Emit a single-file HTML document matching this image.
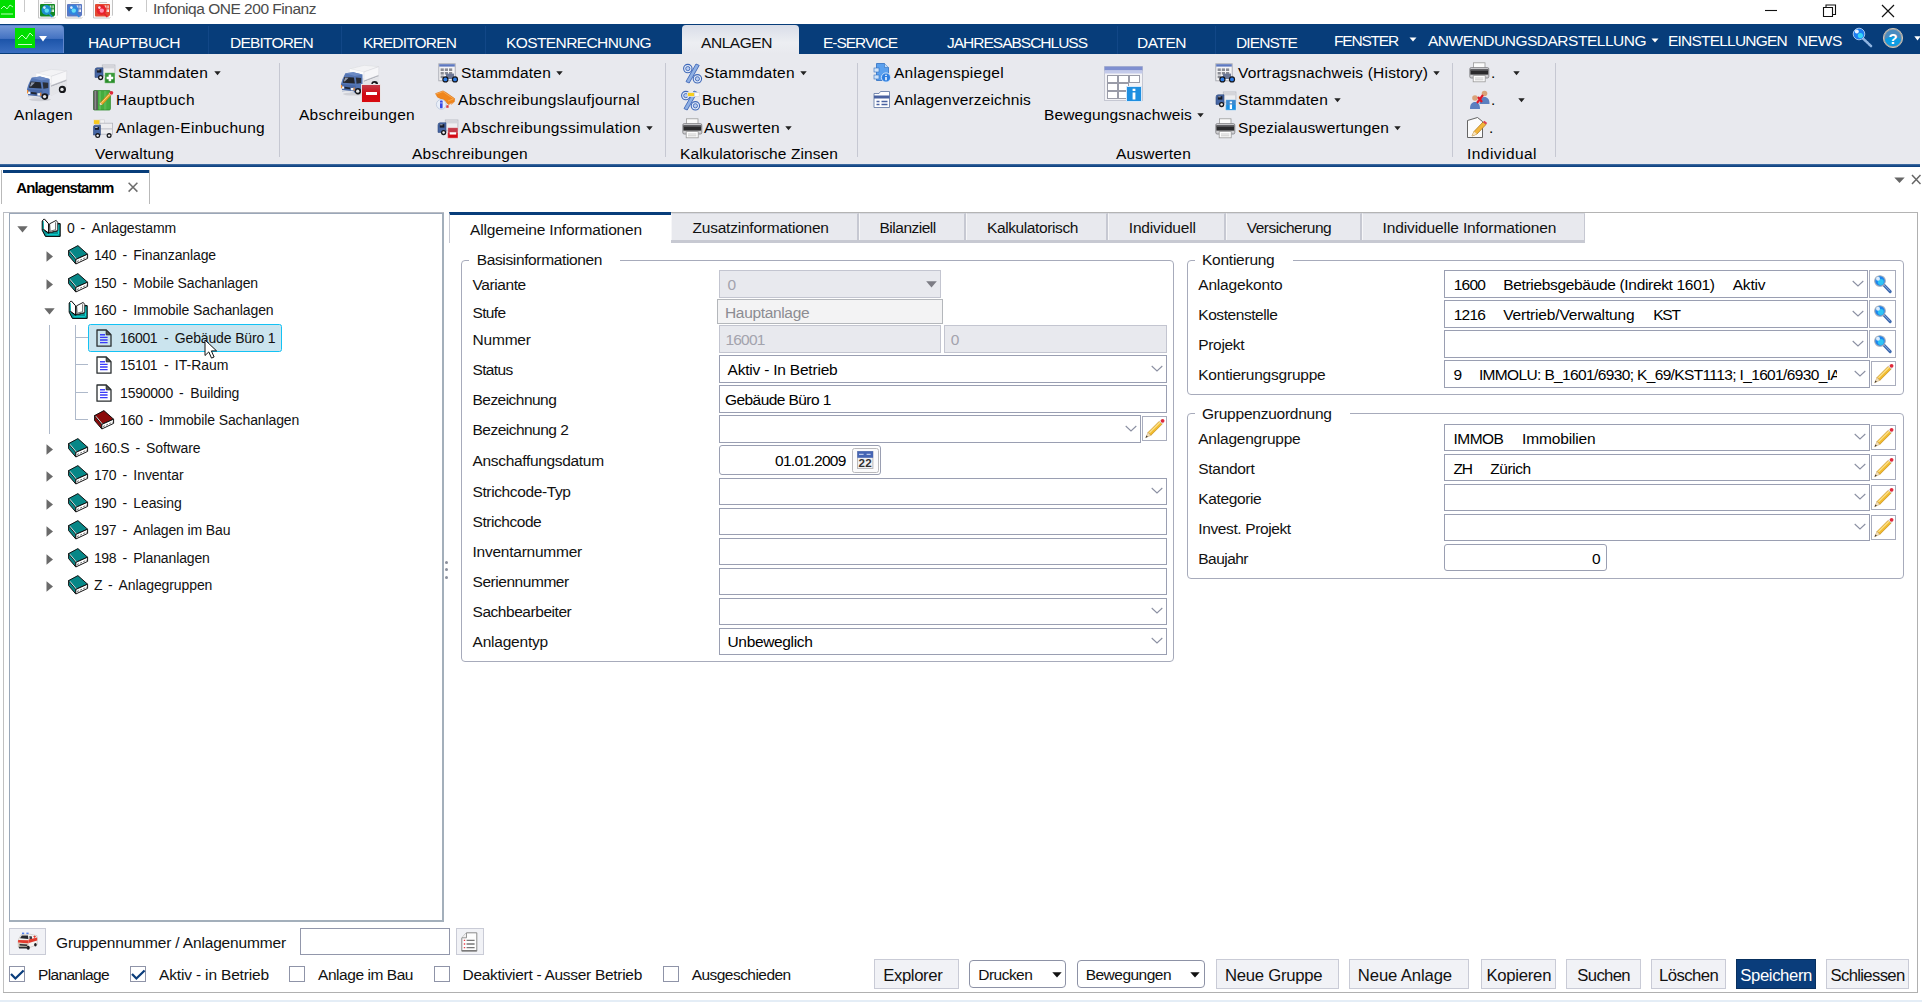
<!DOCTYPE html>
<html lang="de"><head><meta charset="utf-8"><title>Infoniqa ONE 200 Finanz</title>
<style>
html,body{margin:0;padding:0;}
body{width:1922px;height:1002px;overflow:hidden;position:relative;background:#fff;font-family:"Liberation Sans",sans-serif;}
div,span.t,svg{position:absolute;box-sizing:border-box;}
span.t{line-height:20px;white-space:pre;}
.f{border:1px solid #9a9fb2;background:#fff;}
.fd{border:1px solid #c3c5d0;background:#e8e9ee;}
.btn{border:1px solid #c9cbd6;background:#f1f2f6;}
.sb{border:1px solid #b4b7c5;background:#fff;}
.gb{border:1px solid #a9adbc;border-radius:4px;}

</style></head>
<body>
<div style="left:0px;top:0px;width:15px;height:17.5px;background:#00de00;"></div>
<svg style="left:0px;top:0px;" width="15" height="17" viewBox="0 0 15 17"><path d="M1 9 L4 6 L7 9 L10 5 L13 7" stroke="#b8ffb8" stroke-width="1" fill="none"/><path d="M1 14 H13" stroke="#b8ffb8" stroke-width="1"/></svg>
<div style="left:24px;top:0px;width:1px;height:12px;background:#c9c9c9;"></div>
<svg style="left:38px;top:0px;" width="21" height="19" viewBox="0 0 21 19"><path d="M0.5 -1 V18 H16.5 L19.5 15.5 V-1z" fill="#fbfbfb" stroke="#c4c4c4"/><path d="M6 2.5h8" stroke="#c9c9c9" stroke-width="1"/><rect x="2" y="4" width="15" height="12.5" rx="1" fill="#138a24"/><rect x="11.6" y="5.4" width="1.8" height="3" fill="#fff" opacity=".75"/><rect x="14.2" y="5.4" width="1.8" height="3" fill="#fff" opacity=".6"/><rect x="11.6" y="9.4" width="1.8" height="2.6" fill="#fff" opacity=".9"/><rect x="14.2" y="9.4" width="1.8" height="2.6" fill="#fff" opacity=".9"/><circle cx="8.4" cy="10" r="4.9" fill="#1e8fd0"/><circle cx="8.8" cy="10.6" r="2.2" fill="#5fe0f0"/><circle cx="6.4" cy="7.6" r="1.3" fill="#fff" opacity=".85"/><path d="M11.2 13.6l3.2 3.4" stroke="#1e8fd0" stroke-width="1.6"/><path d="M16 16.5h3.5" stroke="#fff" stroke-width="1.6"/></svg>
<svg style="left:65px;top:0px;" width="21" height="19" viewBox="0 0 21 19"><path d="M0.5 -1 V18 H16.5 L19.5 15.5 V-1z" fill="#fbfbfb" stroke="#c4c4c4"/><path d="M6 2.5h8" stroke="#c9c9c9" stroke-width="1"/><rect x="2" y="4" width="15" height="12.5" rx="1" fill="#5878c4"/><rect x="11.6" y="5.4" width="1.8" height="3" fill="#fff" opacity=".75"/><rect x="14.2" y="5.4" width="1.8" height="3" fill="#fff" opacity=".6"/><rect x="11.6" y="9.4" width="1.8" height="2.6" fill="#fff" opacity=".9"/><rect x="14.2" y="9.4" width="1.8" height="2.6" fill="#fff" opacity=".9"/><circle cx="8.4" cy="10" r="4.9" fill="#2f86e0"/><circle cx="8.8" cy="10.6" r="2.2" fill="#62dcf4"/><circle cx="6.4" cy="7.6" r="1.3" fill="#fff" opacity=".85"/><path d="M11.2 13.6l3.2 3.4" stroke="#2f86e0" stroke-width="1.6"/><path d="M16 16.5h3.5" stroke="#fff" stroke-width="1.6"/></svg>
<svg style="left:93px;top:0px;" width="21" height="19" viewBox="0 0 21 19"><path d="M0.5 -1 V18 H16.5 L19.5 15.5 V-1z" fill="#fbfbfb" stroke="#c4c4c4"/><path d="M6 2.5h8" stroke="#c9c9c9" stroke-width="1"/><rect x="2" y="4" width="15" height="12.5" rx="1" fill="#e24a32"/><rect x="11.6" y="5.4" width="1.8" height="3" fill="#fff" opacity=".75"/><rect x="14.2" y="5.4" width="1.8" height="3" fill="#fff" opacity=".6"/><rect x="11.6" y="9.4" width="1.8" height="2.6" fill="#fff" opacity=".9"/><rect x="14.2" y="9.4" width="1.8" height="2.6" fill="#fff" opacity=".9"/><circle cx="8.4" cy="10" r="4.9" fill="#e8202a"/><circle cx="8.8" cy="10.6" r="2.2" fill="#ff8fb0"/><circle cx="6.4" cy="7.6" r="1.3" fill="#fff" opacity=".85"/><path d="M11.2 13.6l3.2 3.4" stroke="#e8202a" stroke-width="1.6"/><path d="M16 16.5h3.5" stroke="#fff" stroke-width="1.6"/></svg>
<svg style="left:124px;top:6px;" width="10" height="6" viewBox="0 0 10 6"><path d="M1 1h8l-4 4.5z" fill="#222"/></svg>
<div style="left:146px;top:0px;width:1px;height:12px;background:#c9c9c9;"></div>
<span class="t" style="letter-spacing:-0.481px;top:-1.5px;font-size:15.5px;color:#4b4b4b;left:153px;">Infoniqa ONE 200 Finanz</span>
<svg style="left:1761px;top:0px;" width="140" height="22" viewBox="0 0 140 22"><path d="M4 10.5h12" stroke="#111" stroke-width="1.1"/><path d="M62.5 7.5h9v9h-9z M65 7.5v-2.5h9.5v9.5h-3" stroke="#111" stroke-width="1.1" fill="none"/><path d="M121 5l12 12M133 5l-12 12" stroke="#111" stroke-width="1.2"/></svg>
<div style="left:0px;top:24px;width:1920px;height:30px;background:#073d7a;"></div>
<div style="left:0px;top:25px;width:64px;height:28px;background:linear-gradient(#7397d6,#4473c2 46%,#1d55aa 50%,#3a6ec0);border-radius:0 4px 0 0;border-right:1px solid #5f86cc;border-top:1px solid #5f86cc;"></div>
<div style="left:15px;top:28px;width:20px;height:20px;background:#00de00;"></div>
<svg style="left:15px;top:28px;" width="20" height="20" viewBox="0 0 20 20"><path d="M3 11 L7 7 L11 11 L15 5 L18 8" stroke="#c8ffc8" stroke-width="1" fill="none"/><path d="M3 16.5 H17" stroke="#c8ffc8" stroke-width="1"/></svg>
<svg style="left:38px;top:35px;" width="10" height="8" viewBox="0 0 10 8"><path d="M1 1h8l-4 5.5z" fill="#fff"/></svg>
<div style="left:682px;top:25px;width:117px;height:29px;background:linear-gradient(#d9dde8,#eceef2 60%,#e8e9ee);border-radius:4px 4px 0 0;"></div>
<span class="t" style="letter-spacing:-0.495px;top:32.5px;font-size:15.5px;color:#fff;left:88px;">HAUPTBUCH</span>
<span class="t" style="letter-spacing:-0.795px;top:32.5px;font-size:15.5px;color:#fff;left:230px;">DEBITOREN</span>
<span class="t" style="letter-spacing:-0.834px;top:32.5px;font-size:15.5px;color:#fff;left:363px;">KREDITOREN</span>
<span class="t" style="letter-spacing:-0.593px;top:32.5px;font-size:15.5px;color:#fff;left:506px;">KOSTENRECHNUNG</span>
<span class="t" style="letter-spacing:-1.031px;top:32.5px;font-size:15.5px;color:#fff;left:823px;">E-SERVICE</span>
<span class="t" style="letter-spacing:-1.003px;top:32.5px;font-size:15.5px;color:#fff;left:947px;">JAHRESABSCHLUSS</span>
<span class="t" style="letter-spacing:-0.478px;top:32.5px;font-size:15.5px;color:#fff;left:1137px;">DATEN</span>
<span class="t" style="letter-spacing:-0.884px;top:32.5px;font-size:15.5px;color:#fff;left:1236px;">DIENSTE</span>
<span class="t" style="letter-spacing:-0.442px;top:32.5px;font-size:15.5px;color:#111;left:701px;">ANLAGEN</span>
<div style="left:208px;top:26px;width:1px;height:28px;background:#124787;"></div>
<div style="left:341px;top:26px;width:1px;height:28px;background:#124787;"></div>
<div style="left:485px;top:26px;width:1px;height:28px;background:#124787;"></div>
<div style="left:1117px;top:26px;width:1px;height:28px;background:#124787;"></div>
<div style="left:1215px;top:26px;width:1px;height:28px;background:#124787;"></div>
<span class="t" style="letter-spacing:-1.2px;top:30.5px;font-size:15.5px;color:#fff;left:1334px;">FENSTER</span>
<svg style="left:1409px;top:37px;" width="8" height="6" viewBox="0 0 8 6"><path d="M0.5 0.5h7l-3.5 4z" fill="#fff"/></svg>
<span class="t" style="letter-spacing:-0.487px;top:30.5px;font-size:15.5px;color:#fff;left:1428px;">ANWENDUNGSDARSTELLUNG</span>
<svg style="left:1651px;top:38px;" width="8" height="6" viewBox="0 0 8 6"><path d="M0.5 0.5h7l-3.5 4z" fill="#fff"/></svg>
<span class="t" style="letter-spacing:-0.785px;top:30.5px;font-size:15.5px;color:#fff;left:1668px;">EINSTELLUNGEN</span>
<span class="t" style="letter-spacing:-0.375px;top:30.5px;font-size:15.5px;color:#fff;left:1797px;">NEWS</span>
<svg style="left:1851px;top:26px;" width="24" height="24" viewBox="0 0 24 24"><path d="M12 12.5l8 7.5" stroke="#8fb4e0" stroke-width="2.6" stroke-linecap="round" stroke-dasharray="1.6 1"/><circle cx="8" cy="8" r="5.8" fill="#1c7df0" stroke="#9fc4ee" stroke-width="1"/><circle cx="9.4" cy="9.6" r="2.6" fill="#35d6f6"/><circle cx="5.8" cy="5.6" r="2" fill="#e8f2ff"/></svg>
<svg style="left:1882px;top:27px;" width="22" height="22" viewBox="0 0 22 22"><circle cx="11" cy="11" r="9.6" fill="#9aa0a8" stroke="#c9c3b4" stroke-width="1"/><circle cx="11" cy="11" r="8.2" fill="#4a8cc0"/><path d="M2.9 12.2 A8.2 8.2 0 0 0 19.1 12.2 Q11 7.5 2.9 12.2z" fill="#0c9ce2"/></svg>
<span class="t" style="top:28.5px;font-size:15px;color:#fff;font-weight:700;left:1888.4px;">?</span>
<svg style="left:1913.5px;top:36px;" width="7" height="6" viewBox="0 0 7 6"><path d="M0.3 0.3h6.4l-3.2 4.2z" fill="#fff"/></svg>
<div style="left:0px;top:54px;width:1920px;height:110px;background:#e8e9ee;"></div>
<div style="left:0px;top:164px;width:1920px;height:3px;background:linear-gradient(#4a74a8,#1c4f8c 50%,#0a3d7b);"></div>
<div style="left:279px;top:63px;width:1px;height:94px;background:#c6c8d2;"></div>
<div style="left:665px;top:63px;width:1px;height:94px;background:#c6c8d2;"></div>
<div style="left:857px;top:63px;width:1px;height:94px;background:#c6c8d2;"></div>
<div style="left:1452px;top:63px;width:1px;height:94px;background:#c6c8d2;"></div>
<div style="left:1555px;top:63px;width:1px;height:94px;background:#c6c8d2;"></div>
<svg style="left:26px;top:68px;" width="42" height="34" viewBox="0 0 42 34"><ellipse cx="14" cy="31.6" rx="11" ry="1.6" fill="#cfd0d6"/><path d="M10.3 5.2 L25.3 1.4 L40.8 2.8 L25.1 8.4z" fill="#f3f3f5" stroke="#d9dade" stroke-width=".5"/><path d="M10.3 5.2 L25.1 8.4 L25.1 15 L10.3 11.5z" fill="#fdfdfd"/><path d="M25.1 8.4 L40.8 2.8 L40.4 19.8 L25.1 27.6z" fill="#f6f6f8" stroke="#d4d5da" stroke-width=".5"/><path d="M25.1 17.2 L40.4 11.6 L40.4 13.2 L25.1 19z" fill="#b4b6be"/><path d="M25.1 19 L40.4 13.2 L40.4 19.8 L25.1 27.6z" fill="#e4e5e9"/><path d="M5.6 9.8 L14 8.6 L23.6 11 L23.6 26.8 L19.5 30 L2.6 28.8 L1 21 L2.6 16z" fill="#5576b4"/><path d="M5.6 9.8 L14 8.6 L23.6 11 L15.5 12.6z" fill="#6b8ac4"/><path d="M4.6 13.6 L14.6 14.2 L15.6 20.6 L3 19.8z" fill="#23262e"/><path d="M5.4 14.2 L9 14.4 L5 18.4 L4 18.2z" fill="#8e98ac"/><path d="M16.6 14.2 L22.2 14.8 L22.2 20 L17.4 20.8z" fill="#2b2f39"/><path d="M1.2 21 L16.4 22.6 L16.8 29.8 L2.6 28.8z" fill="#4868a6"/><rect x="1.6" y="23.6" width="2.6" height="2.4" fill="#f6f6f6"/><rect x="1" y="22" width="1.2" height="3.4" fill="#f08a30"/><rect x="11.4" y="25.2" width="2.8" height="2.4" fill="#f6f6f6"/><rect x="14.2" y="24.6" width="1.2" height="3.4" fill="#f08a30"/><path d="M1.8 27.2 L14.6 28.6 L14.6 30.3 L2.4 29.2z" fill="#dfe1e6"/><path d="M5 24 L10.6 24.6 L10.6 26.4 L5 25.8z" fill="#1e2430"/><circle cx="18.9" cy="28.6" r="3.3" fill="#17181c"/><circle cx="18.6" cy="28.6" r="1.7" fill="#e6e6e8"/><circle cx="36.4" cy="21.4" r="3.6" fill="#17181c"/><circle cx="36" cy="21.4" r="1.7" fill="#e6e6e8"/></svg>
<span class="t" style="letter-spacing:0.301px;top:104.5px;font-size:15.5px;color:#000;left:14px;">Anlagen</span>
<svg style="left:94px;top:64px;" width="22" height="21" viewBox="0 0 22 21"><g transform="translate(0,0)"><rect x="8.3" y="1" width="12.6" height="10.2" fill="#eeeef0" stroke="#b3b5bc" stroke-width=".8"/><rect x="8.7" y="1.4" width="11.8" height="3" fill="#d4d5da"/><path d="M1 6.2 Q1 3.8 3 3.8 H9 V13.4 H1z" fill="#4666a4" stroke="#2d4678" stroke-width=".6"/><rect x="2.8" y="5.2" width="4.6" height="3.4" fill="#171b27"/><path d="M3.2 5.8h2.4" stroke="#cfd6e6" stroke-width=".8"/><circle cx="6.6" cy="13.6" r="2.6" fill="#16171b"/><circle cx="6.6" cy="13.6" r="1.25" fill="#f4f4f4"/></g><rect x="10.8" y="8.7" width="10.2" height="10.4" fill="#3a9a3a"/><rect x="10.8" y="14" width="10.2" height="5.1" fill="#2a8e2a"/><rect x="10.8" y="8.7" width="10.2" height="10.4" fill="none" stroke="#fff" stroke-opacity=".45" stroke-width=".8"/><path d="M15.9 10.6v6.6M12.6 13.9h6.6" stroke="#fff" stroke-width="2.5"/></svg>
<span class="t" style="letter-spacing:0.211px;top:62.5px;font-size:15.5px;color:#000;left:118px;">Stammdaten</span>
<svg style="left:214px;top:71px;" width="7" height="5" viewBox="0 0 7 5"><path d="M0.3 0.3h6.4l-3.2 4z" fill="#222"/></svg>
<svg style="left:93px;top:90px;" width="22" height="21" viewBox="0 0 22 21"><rect x="0.4" y="0.6" width="17" height="19.4" rx="1.2" fill="#45ad3f" stroke="#2f8a2c" stroke-width=".8"/><rect x="6" y="1" width="2" height="18.6" fill="#6cc465" opacity=".6"/><rect x="11" y="1" width="2.4" height="18.6" fill="#6cc465" opacity=".5"/><rect x="0.4" y="0.6" width="4.4" height="19.4" rx="1" fill="#555"/><rect x="1.6" y="1" width="1.6" height="18.6" fill="#8a8a8a"/><path d="M7.4 12.6 L15.8 3.6 L17.8 5.6 L9.4 14.6z" fill="#f0a92a" stroke="#b87a16" stroke-width=".6"/><path d="M8.4 12.8 L16.2 4.6" stroke="#fbd47a" stroke-width="1"/><path d="M15.8 3.6l1-1 2 2-1 1z" fill="#f4f4f4"/><circle cx="18.4" cy="2.8" r="1.9" fill="#e0283a"/><path d="M6 15.6 L7.4 12.6 L9.4 14.6z" fill="#f6e2c0"/><path d="M6 15.6l.6-1.3.8.8z" fill="#222"/></svg>
<span class="t" style="letter-spacing:0.446px;top:89.5px;font-size:15.5px;color:#000;left:116px;">Hauptbuch</span>
<svg style="left:93px;top:119px;" width="22" height="21" viewBox="0 0 22 21"><rect x="0.6" y="0.8" width="6.4" height="4.5" fill="#f7c81e" stroke="#e6e6e8" stroke-width=".7"/><rect x="7" y="0.8" width="4.5" height="4.5" fill="#f3f3f3" stroke="#d2d2d6" stroke-width=".7"/><rect x="7" y="4.2" width="12.6" height="11" fill="#eeeef0" stroke="#b3b5bc" stroke-width=".8"/><rect x="7.4" y="9" width="11.8" height="1.6" fill="#cfd0d6"/><path d="M0.3 8.6 Q0.3 6.2 2.3 6.2 H7.4 V16 H0.3z" fill="#4666a4" stroke="#2d4678" stroke-width=".6"/><rect x="1.8" y="7.8" width="4.2" height="3" fill="#171b27"/><path d="M2.2 8.4h2.4" stroke="#e6eaf4" stroke-width=".9"/><circle cx="4.7" cy="16.6" r="2.5" fill="#16171b"/><circle cx="4.7" cy="16.6" r="1.2" fill="#f4f4f4"/><circle cx="16.1" cy="16.6" r="2.5" fill="#16171b"/><circle cx="16.1" cy="16.6" r="1.2" fill="#f4f4f4"/></svg>
<span class="t" style="letter-spacing:0.282px;top:117.5px;font-size:15.5px;color:#000;left:116px;">Anlagen-Einbuchung</span>
<span class="t" style="letter-spacing:0.23px;top:143.5px;font-size:15.5px;color:#000;left:95px;">Verwaltung</span>
<svg style="left:340px;top:64px;" width="40" height="32.4" viewBox="0 0 42 34"><ellipse cx="14" cy="31.6" rx="11" ry="1.6" fill="#cfd0d6"/><path d="M10.3 5.2 L25.3 1.4 L40.8 2.8 L25.1 8.4z" fill="#f3f3f5" stroke="#d9dade" stroke-width=".5"/><path d="M10.3 5.2 L25.1 8.4 L25.1 15 L10.3 11.5z" fill="#fdfdfd"/><path d="M25.1 8.4 L40.8 2.8 L40.4 19.8 L25.1 27.6z" fill="#f6f6f8" stroke="#d4d5da" stroke-width=".5"/><path d="M25.1 17.2 L40.4 11.6 L40.4 13.2 L25.1 19z" fill="#b4b6be"/><path d="M25.1 19 L40.4 13.2 L40.4 19.8 L25.1 27.6z" fill="#e4e5e9"/><path d="M5.6 9.8 L14 8.6 L23.6 11 L23.6 26.8 L19.5 30 L2.6 28.8 L1 21 L2.6 16z" fill="#5576b4"/><path d="M5.6 9.8 L14 8.6 L23.6 11 L15.5 12.6z" fill="#6b8ac4"/><path d="M4.6 13.6 L14.6 14.2 L15.6 20.6 L3 19.8z" fill="#23262e"/><path d="M5.4 14.2 L9 14.4 L5 18.4 L4 18.2z" fill="#8e98ac"/><path d="M16.6 14.2 L22.2 14.8 L22.2 20 L17.4 20.8z" fill="#2b2f39"/><path d="M1.2 21 L16.4 22.6 L16.8 29.8 L2.6 28.8z" fill="#4868a6"/><rect x="1.6" y="23.6" width="2.6" height="2.4" fill="#f6f6f6"/><rect x="1" y="22" width="1.2" height="3.4" fill="#f08a30"/><rect x="11.4" y="25.2" width="2.8" height="2.4" fill="#f6f6f6"/><rect x="14.2" y="24.6" width="1.2" height="3.4" fill="#f08a30"/><path d="M1.8 27.2 L14.6 28.6 L14.6 30.3 L2.4 29.2z" fill="#dfe1e6"/><path d="M5 24 L10.6 24.6 L10.6 26.4 L5 25.8z" fill="#1e2430"/><circle cx="18.9" cy="28.6" r="3.3" fill="#17181c"/><circle cx="18.6" cy="28.6" r="1.7" fill="#e6e6e8"/><circle cx="36.4" cy="21.4" r="3.6" fill="#17181c"/><circle cx="36" cy="21.4" r="1.7" fill="#e6e6e8"/></svg>
<div style="left:361px;top:84px;width:20px;height:19px;background:linear-gradient(#c23a48,#d00812 55%,#d80a10);border:1px solid #e9e3e4;"></div>
<div style="left:365.5px;top:92px;width:11px;height:2.5px;background:#fff;"></div>
<span class="t" style="letter-spacing:0.283px;top:104.5px;font-size:15.5px;color:#000;left:299px;">Abschreibungen</span>
<svg style="left:438px;top:63px;" width="21" height="21" viewBox="0 0 21 21"><rect x="0.8" y="0.8" width="16.4" height="17" fill="#f4f4f6" stroke="#a6a8b0" stroke-width=".9"/><rect x="1.2" y="1.2" width="15.6" height="2.4" fill="#5d78c0"/><g fill="#8a8c94"><rect x="2.6" y="5.4" width="3.2" height="2.6"/><rect x="6.8" y="5.4" width="3.2" height="2.6"/><rect x="11" y="5.4" width="3.2" height="2.6"/><rect x="2.6" y="9" width="3.2" height="2.6"/><rect x="6.8" y="9" width="3.2" height="2.6"/><rect x="11" y="9" width="3.2" height="2.6"/><rect x="2.6" y="12.6" width="3.2" height="2.6"/></g><rect x="8" y="10.6" width="8" height="5.4" fill="#6c7896"/><circle cx="7.4" cy="16.4" r="3.1" fill="#14161c"/><circle cx="7.4" cy="16.4" r="1.9" fill="#2f7fe8"/><circle cx="17" cy="16.4" r="3.1" fill="#14161c"/><circle cx="17" cy="16.4" r="1.9" fill="#2f7fe8"/></svg>
<span class="t" style="letter-spacing:0.211px;top:62.5px;font-size:15.5px;color:#000;left:461px;">Stammdaten</span>
<svg style="left:556px;top:71px;" width="7" height="5" viewBox="0 0 7 5"><path d="M0.3 0.3h6.4l-3.2 4z" fill="#222"/></svg>
<svg style="left:435px;top:90px;" width="22" height="21" viewBox="0 0 22 21"><path d="M0.6 3.6 L8 0.9 L11 2.6 L19.6 8.6 L19.2 12 L13.4 14.4 L9 10 L2.6 7.2z" fill="#f0861c" stroke="#d86f10" stroke-width=".6"/><path d="M1 4 L8 1.6 L18.6 8.8 L13 11" fill="none" stroke="#f8a850" stroke-width="1"/><path d="M13.4 14.4l3.4-1.2M19.2 12l-3 2.6" stroke="#f4a45a" stroke-width=".9"/><path d="M11.2 15.2h2.4v2.6h-2.4z" fill="#e03a3a"/><circle cx="6.3" cy="14.4" r="4.9" fill="#e9eff9" stroke="#b9c5da" stroke-width=".8"/><rect x="5" y="10.6" width="2.6" height="7.6" rx=".6" fill="#3648e4"/><rect x="5" y="12.4" width="2.6" height="1" fill="#aeb8f4"/></svg>
<span class="t" style="letter-spacing:0.331px;top:89.5px;font-size:15.5px;color:#000;left:458px;">Abschreibungslaufjournal</span>
<svg style="left:437px;top:119px;" width="22" height="21" viewBox="0 0 22 21"><g transform="translate(0,0)"><rect x="8.3" y="1" width="12.6" height="10.2" fill="#eeeef0" stroke="#b3b5bc" stroke-width=".8"/><rect x="8.7" y="1.4" width="11.8" height="3" fill="#d4d5da"/><path d="M1 6.2 Q1 3.8 3 3.8 H9 V13.4 H1z" fill="#4666a4" stroke="#2d4678" stroke-width=".6"/><rect x="2.8" y="5.2" width="4.6" height="3.4" fill="#171b27"/><path d="M3.2 5.8h2.4" stroke="#cfd6e6" stroke-width=".8"/><circle cx="6.6" cy="13.6" r="2.6" fill="#16171b"/><circle cx="6.6" cy="13.6" r="1.25" fill="#f4f4f4"/></g><rect x="10.8" y="8.7" width="10.2" height="10.4" fill="#c43a48"/><rect x="10.8" y="14" width="10.2" height="5.1" fill="#d40a14"/><rect x="10.8" y="8.7" width="10.2" height="10.4" fill="none" stroke="#fff" stroke-opacity=".45" stroke-width=".8"/><path d="M12.6 14.4h6.6" stroke="#fff" stroke-width="2.3"/></svg>
<span class="t" style="letter-spacing:0.334px;top:117.5px;font-size:15.5px;color:#000;left:461px;">Abschreibungssimulation</span>
<svg style="left:646px;top:126px;" width="7" height="5" viewBox="0 0 7 5"><path d="M0.3 0.3h6.4l-3.2 4z" fill="#222"/></svg>
<span class="t" style="letter-spacing:0.283px;top:143.5px;font-size:15.5px;color:#000;left:412px;">Abschreibungen</span>
<svg style="left:682px;top:63px;" width="22" height="22" viewBox="0 0 22 22"><path d="M14 1 L17.2 2.4 L7.2 20 L4 18.6z" fill="#8fb0e4" stroke="#3f68b8" stroke-width=".9"/><circle cx="5.8" cy="5.6" r="4.2" fill="#e3ebf8" stroke="#3f68b8" stroke-width="1.1"/><circle cx="5.8" cy="5.6" r="2.1" fill="#b9cdf0" stroke="#3f68b8" stroke-width=".9"/><circle cx="15.4" cy="15.8" r="4.2" fill="#e3ebf8" stroke="#3f68b8" stroke-width="1.1"/><circle cx="15.4" cy="15.8" r="2.1" fill="#b9cdf0" stroke="#3f68b8" stroke-width=".9"/></svg>
<span class="t" style="letter-spacing:0.311px;top:62.5px;font-size:15.5px;color:#000;left:704px;">Stammdaten</span>
<svg style="left:800px;top:71px;" width="7" height="5" viewBox="0 0 7 5"><path d="M0.3 0.3h6.4l-3.2 4z" fill="#222"/></svg>
<svg style="left:680px;top:90px;" width="22" height="22" viewBox="0 0 22 22"><path d="M14 1 L17.2 2.4 L7.2 20 L4 18.6z" fill="#8fb0e4" stroke="#3f68b8" stroke-width=".9"/><circle cx="5.8" cy="5.6" r="4.2" fill="#e3ebf8" stroke="#3f68b8" stroke-width="1.1"/><circle cx="5.8" cy="5.6" r="2.1" fill="#b9cdf0" stroke="#3f68b8" stroke-width=".9"/><circle cx="15.4" cy="15.8" r="4.2" fill="#e3ebf8" stroke="#3f68b8" stroke-width="1.1"/><circle cx="15.4" cy="15.8" r="2.1" fill="#b9cdf0" stroke="#3f68b8" stroke-width=".9"/><rect x="7.6" y="2.6" width="7" height="3.8" fill="#f7cf1c" stroke="#e8e8ea" stroke-width=".8"/><rect x="14.6" y="2.6" width="4.6" height="3.8" fill="#fafafa" stroke="#d0d0d4" stroke-width=".6"/></svg>
<span class="t" style="letter-spacing:0.07px;top:89.5px;font-size:15.5px;color:#000;left:702px;">Buchen</span>
<svg style="left:682px;top:118px;" width="21" height="21" viewBox="0 0 21 21"><rect x="4.5" y="0.8" width="11.5" height="6" fill="#fbfbfb" stroke="#9a9a9a" stroke-width=".8"/><rect x="0.8" y="5.6" width="19" height="10.4" rx="1.4" fill="#cfcfd2" stroke="#7a7a7e" stroke-width=".8"/><rect x="1.4" y="7.4" width="17.8" height="5.2" fill="#2a2a2c"/><rect x="1.4" y="7.4" width="17.8" height="1.4" fill="#5c5c60"/><rect x="4.2" y="13.6" width="12" height="6.2" fill="#fdfdfd" stroke="#9a9a9a" stroke-width=".8"/><path d="M6 16h8.4M6 17.8h8.4" stroke="#b5b5b5" stroke-width=".7"/></svg>
<span class="t" style="letter-spacing:0.307px;top:117.5px;font-size:15.5px;color:#000;left:704px;">Auswerten</span>
<svg style="left:785px;top:126px;" width="7" height="5" viewBox="0 0 7 5"><path d="M0.3 0.3h6.4l-3.2 4z" fill="#222"/></svg>
<span class="t" style="letter-spacing:0.093px;top:143.5px;font-size:15.5px;color:#000;left:680px;">Kalkulatorische Zinsen</span>
<svg style="left:873px;top:63px;" width="20" height="21" viewBox="0 0 20 21"><path d="M3.5 0.5h8l4 4v13h-12z" fill="#5aa0ee" stroke="#2f6fc0" stroke-width=".8"/><path d="M11.5 0.5v4h4" fill="#bcd9f8" stroke="#2f6fc0" stroke-width=".6"/><rect x="1" y="5" width="5" height="4" fill="#cfe3fa" stroke="#2f6fc0" stroke-width=".6"/><rect x="1" y="12" width="5" height="4" fill="#cfe3fa" stroke="#2f6fc0" stroke-width=".6"/><circle cx="13" cy="14.5" r="4.6" fill="#2f7fe0" stroke="#d7e8fb" stroke-width=".9"/><path d="M13 14v3.2M13 11.8v1.1" stroke="#fff" stroke-width="1.5"/></svg>
<span class="t" style="letter-spacing:0.285px;top:62.5px;font-size:15.5px;color:#000;left:894px;">Anlagenspiegel</span>
<svg style="left:873px;top:90px;" width="20" height="21" viewBox="0 0 20 21"><path d="M1 3.5h5l1.5-2h9v16h-15.5z" fill="#fff" stroke="#6a7fa8" stroke-width=".9"/><rect x="1" y="5.5" width="15.5" height="3" fill="#4a62a0"/><path d="M3.5 11.5h3M8.5 11.5h6M3.5 14.5h3M8.5 14.5h6" stroke="#4a62a0" stroke-width="1.3"/></svg>
<span class="t" style="letter-spacing:0.143px;top:89.5px;font-size:15.5px;color:#000;left:894px;">Anlagenverzeichnis</span>
<svg style="left:1104px;top:66px;" width="40" height="38" viewBox="0 0 40 38"><rect x="0.5" y="0.5" width="38" height="34" fill="#f3f3f6" stroke="#c5c7d2"/><rect x="0.5" y="0.5" width="38" height="4" fill="#7f8fd0"/><rect x="0.5" y="4.5" width="38" height="3" fill="#c3caea"/><g fill="#fff" stroke="#9a9ca8" stroke-width="1"><rect x="3.5" y="9.5" width="10" height="7"/><rect x="14.5" y="9.5" width="10" height="7"/><rect x="25.5" y="9.5" width="10" height="7"/><rect x="3.5" y="17.5" width="10" height="7"/><rect x="14.5" y="17.5" width="10" height="7"/><rect x="3.5" y="25.5" width="10" height="7"/><rect x="14.5" y="25.5" width="10" height="7"/></g><rect x="22.5" y="20.5" width="15" height="15" fill="#1f8fe0" stroke="#d5e8fa" stroke-width="1"/><path d="M30 26.5v7M30 22.7v2.2" stroke="#fff" stroke-width="2.8"/></svg>
<span class="t" style="letter-spacing:0.14px;top:104.5px;font-size:15.5px;color:#000;left:1044px;">Bewegungsnachweis</span>
<svg style="left:1197px;top:113px;" width="7" height="5" viewBox="0 0 7 5"><path d="M0.3 0.3h6.4l-3.2 4z" fill="#222"/></svg>
<svg style="left:1215px;top:63px;" width="21" height="21" viewBox="0 0 21 21"><rect x="0.8" y="0.8" width="16.4" height="17" fill="#f4f4f6" stroke="#a6a8b0" stroke-width=".9"/><rect x="1.2" y="1.2" width="15.6" height="2.4" fill="#5d78c0"/><g fill="#8a8c94"><rect x="2.6" y="5.4" width="3.2" height="2.6"/><rect x="6.8" y="5.4" width="3.2" height="2.6"/><rect x="11" y="5.4" width="3.2" height="2.6"/><rect x="2.6" y="9" width="3.2" height="2.6"/><rect x="6.8" y="9" width="3.2" height="2.6"/><rect x="11" y="9" width="3.2" height="2.6"/><rect x="2.6" y="12.6" width="3.2" height="2.6"/></g><rect x="8" y="10.6" width="8" height="5.4" fill="#6c7896"/><circle cx="7.4" cy="16.4" r="3.1" fill="#14161c"/><circle cx="7.4" cy="16.4" r="1.9" fill="#2f7fe8"/><circle cx="17" cy="16.4" r="3.1" fill="#14161c"/><circle cx="17" cy="16.4" r="1.9" fill="#2f7fe8"/></svg>
<span class="t" style="letter-spacing:0.184px;top:62.5px;font-size:15.5px;color:#000;left:1238px;">Vortragsnachweis (History)</span>
<svg style="left:1433px;top:71px;" width="7" height="5" viewBox="0 0 7 5"><path d="M0.3 0.3h6.4l-3.2 4z" fill="#222"/></svg>
<svg style="left:1215px;top:91px;" width="22" height="21" viewBox="0 0 22 21"><g transform="translate(0,0)"><rect x="8.3" y="1" width="12.6" height="10.2" fill="#eeeef0" stroke="#b3b5bc" stroke-width=".8"/><rect x="8.7" y="1.4" width="11.8" height="3" fill="#d4d5da"/><path d="M1 6.2 Q1 3.8 3 3.8 H9 V13.4 H1z" fill="#4666a4" stroke="#2d4678" stroke-width=".6"/><rect x="2.8" y="5.2" width="4.6" height="3.4" fill="#171b27"/><path d="M3.2 5.8h2.4" stroke="#cfd6e6" stroke-width=".8"/><circle cx="6.6" cy="13.6" r="2.6" fill="#16171b"/><circle cx="6.6" cy="13.6" r="1.25" fill="#f4f4f4"/></g><rect x="10.8" y="8.7" width="10.2" height="10.4" fill="#3a8ad0"/><rect x="10.8" y="14" width="10.2" height="5.1" fill="#1a8ee0"/><rect x="10.8" y="8.7" width="10.2" height="10.4" fill="none" stroke="#fff" stroke-opacity=".45" stroke-width=".8"/><path d="M15.9 13.4v4.6M15.9 10.4v1.8" stroke="#fff" stroke-width="2.3"/></svg>
<span class="t" style="letter-spacing:0.211px;top:89.5px;font-size:15.5px;color:#000;left:1238px;">Stammdaten</span>
<svg style="left:1334px;top:98px;" width="7" height="5" viewBox="0 0 7 5"><path d="M0.3 0.3h6.4l-3.2 4z" fill="#222"/></svg>
<svg style="left:1215px;top:118px;" width="21" height="21" viewBox="0 0 21 21"><rect x="4.5" y="0.8" width="11.5" height="6" fill="#fbfbfb" stroke="#9a9a9a" stroke-width=".8"/><rect x="0.8" y="5.6" width="19" height="10.4" rx="1.4" fill="#cfcfd2" stroke="#7a7a7e" stroke-width=".8"/><rect x="1.4" y="7.4" width="17.8" height="5.2" fill="#2a2a2c"/><rect x="1.4" y="7.4" width="17.8" height="1.4" fill="#5c5c60"/><rect x="4.2" y="13.6" width="12" height="6.2" fill="#fdfdfd" stroke="#9a9a9a" stroke-width=".8"/><path d="M6 16h8.4M6 17.8h8.4" stroke="#b5b5b5" stroke-width=".7"/></svg>
<span class="t" style="letter-spacing:0.146px;top:117.5px;font-size:15.5px;color:#000;left:1238px;">Spezialauswertungen</span>
<svg style="left:1394px;top:126px;" width="7" height="5" viewBox="0 0 7 5"><path d="M0.3 0.3h6.4l-3.2 4z" fill="#222"/></svg>
<span class="t" style="letter-spacing:0.196px;top:143.5px;font-size:15.5px;color:#000;left:1116px;">Auswerten</span>
<svg style="left:1469px;top:62px;" width="21" height="21" viewBox="0 0 21 21"><rect x="4.5" y="0.8" width="11.5" height="6" fill="#fbfbfb" stroke="#9a9a9a" stroke-width=".8"/><rect x="0.8" y="5.6" width="19" height="10.4" rx="1.4" fill="#cfcfd2" stroke="#7a7a7e" stroke-width=".8"/><rect x="1.4" y="7.4" width="17.8" height="5.2" fill="#2a2a2c"/><rect x="1.4" y="7.4" width="17.8" height="1.4" fill="#5c5c60"/><rect x="4.2" y="13.6" width="12" height="6.2" fill="#fdfdfd" stroke="#9a9a9a" stroke-width=".8"/><path d="M6 16h8.4M6 17.8h8.4" stroke="#b5b5b5" stroke-width=".7"/></svg>
<span class="t" style="top:62.5px;font-size:15.5px;color:#000;left:1491px;">.</span>
<svg style="left:1513px;top:71px;" width="7" height="5" viewBox="0 0 7 5"><path d="M0.3 0.3h6.4l-3.2 4z" fill="#222"/></svg>
<svg style="left:1469px;top:89px;" width="22" height="21" viewBox="0 0 22 21"><circle cx="6" cy="9" r="2.8" fill="#d9a37a"/><path d="M1 20c0-5 2-7 5-7s5 2 5 7z" fill="#5a7fc0"/><circle cx="15.5" cy="4.5" r="2.8" fill="#d9a37a"/><path d="M10.5 15c0-5 2-7 5-7s5 2 5 7z" fill="#5a7fc0"/><path d="M8 14 L14 6 M9 8l4 5" stroke="#e01828" stroke-width="2.2"/></svg>
<span class="t" style="top:89.5px;font-size:15.5px;color:#000;left:1491px;">.</span>
<svg style="left:1518px;top:98px;" width="7" height="5" viewBox="0 0 7 5"><path d="M0.3 0.3h6.4l-3.2 4z" fill="#222"/></svg>
<svg style="left:1466px;top:117px;" width="24" height="22" viewBox="0 0 24 22"><path d="M1.5 3.5l10-3 5 4v16h-15z" fill="#fbfbfb" stroke="#555" stroke-width=".9"/><path d="M6 19 L8 14.5 L17 5 L20 7.5 L11 17z" fill="#f3b53a" stroke="#a8741a" stroke-width=".7"/><path d="M17 5l3 2.5 1.2-1.4-2.8-2.4z" fill="#e04050"/><path d="M6 19l2-4.5 3 2.5z" fill="#f6e3c0"/></svg>
<span class="t" style="top:117.5px;font-size:15.5px;color:#000;left:1489px;">.</span>
<span class="t" style="letter-spacing:0.45px;top:143.5px;font-size:15.5px;color:#000;left:1467px;">Individual</span>
<div style="left:1px;top:170px;width:149px;height:34px;background:#fff;border-left:1px solid #b9b9b9;border-right:1px solid #b9b9b9;"></div>
<div style="left:3px;top:170px;width:146px;height:3px;background:#073d7a;"></div>
<span class="t" style="letter-spacing:-0.844px;top:177.5px;font-size:15px;color:#000;font-weight:700;left:16.2px;">Anlagenstamm</span>
<svg style="left:127px;top:181px;" width="12" height="12" viewBox="0 0 12 12"><path d="M1.6 1.8l8.8 8.8M10.4 1.8l-8.8 8.8" stroke="#6e6e6e" stroke-width="1.5"/></svg>
<svg style="left:1894px;top:177px;" width="11" height="7" viewBox="0 0 11 7"><path d="M0.3 0.5h10.4l-5.2 5.5z" fill="#666"/></svg>
<svg style="left:1910.5px;top:174px;" width="10" height="11" viewBox="0 0 10 11"><path d="M1 1l8.5 9M9.5 1l-8.5 9" stroke="#666" stroke-width="1.5"/></svg>
<div style="left:3px;top:212px;width:1px;height:781px;background:#c0c0c0;"></div>
<div style="left:3px;top:992px;width:1915px;height:1px;background:#b0b0b0;"></div>
<div style="left:1917px;top:212px;width:1px;height:781px;background:#b0b0b0;"></div>
<div style="left:0px;top:1000px;width:1922px;height:2px;background:#e4edf6;"></div>
<div style="left:3px;top:212px;width:441px;height:1px;background:#b8bcc4;"></div>
<div style="left:9px;top:213px;width:435px;height:709px;border:1px solid #9aa7b8;border-right:2px solid #a3afbb;border-bottom:2px solid #a3afbb;background:#fff;"></div>
<div style="left:49px;top:325px;width:1px;height:109px;background:#aeb9ca;"></div>
<div style="left:75px;top:325px;width:1px;height:95px;background:#aeb9ca;"></div>
<div style="left:75px;top:337px;width:13px;height:1px;background:#aeb9ca;"></div>
<div style="left:75px;top:364px;width:13px;height:1px;background:#aeb9ca;"></div>
<div style="left:75px;top:392px;width:13px;height:1px;background:#aeb9ca;"></div>
<div style="left:75px;top:419px;width:13px;height:1px;background:#aeb9ca;"></div>
<div style="left:88px;top:324px;width:194px;height:28px;background:#cbe4ee;border:1px solid #14c2f4;border-radius:2.5px;"></div>
<svg style="left:17px;top:225.5px;" width="11" height="7" viewBox="0 0 11 7"><path d="M0.3 0.3h10.4l-5.2 6.2z" fill="#6a6a6a"/></svg>
<svg style="left:41px;top:217.7px;" width="21" height="20" viewBox="0 0 21 20"><path d="M1.2 3 V12.2 L4.4 18.4 H19.2 V5.6 H16 V13 L7 15 L2.6 11.4 V2.4z" fill="#089292" stroke="#000" stroke-width="1" stroke-linejoin="round"/><path d="M17.6 7v9M5.5 16.8h12" stroke="#12e6e6" stroke-width=".9"/><path d="M1.6 2.6 L3.3 0.9 L7.6 5.8 V15 L2.6 11.4z" fill="#fff" stroke="#000" stroke-width="1" stroke-linejoin="round"/><path d="M2.3 3.2V11" stroke="#10caca" stroke-width="1"/><path d="M8.6 5.8 L15.2 2.4 L16.8 4.6 V12.6 L9 14.4z" fill="#fff" stroke="#222" stroke-width="1" stroke-linejoin="round"/><path d="M14.6 4.2 V11.8 L10 13" fill="none" stroke="#777" stroke-width="1.1"/></svg>
<span class="t" style="letter-spacing:0.203px;top:218.0px;font-size:14px;color:#111;left:67.0px;">0</span>
<span class="t" style="top:218.0px;font-size:14px;color:#111;left:80.5px;">-</span>
<span class="t" style="letter-spacing:-0.109px;top:218.0px;font-size:14px;color:#111;left:91.60000000000001px;">Anlagestamm</span>
<svg style="left:46px;top:250.5px;" width="8" height="11" viewBox="0 0 8 11"><path d="M0.5 0.3v10.4l6.5-5.2z" fill="#6a6a6a"/></svg>
<svg style="left:68px;top:244.6px;" width="21" height="20" viewBox="0 0 21 20"><path d="M0.6 5.6 L9.9 0.6 L19.6 9.2 L7.8 14.4z" fill="#078787" stroke="#111" stroke-width="1" stroke-linejoin="round"/><path d="M0.6 5.6 L7.8 14.4 L7.8 19 L0.6 10.6z" fill="#078787" stroke="#111" stroke-width="1" stroke-linejoin="round"/><path d="M1.8 6.2 L8.4 14" stroke="#e8f4f4" stroke-width=".9"/><path d="M7.8 14.4 L19.6 9.2 L19.6 13.4 L7.8 19z" fill="#fff" stroke="#111" stroke-width="1" stroke-linejoin="round"/><path d="M9 16.6 L19 12" stroke="#555" stroke-width=".8" stroke-dasharray="2.2 1.2"/></svg>
<span class="t" style="letter-spacing:-0.386px;top:245.0px;font-size:14px;color:#111;left:93.9px;">140</span>
<span class="t" style="top:245.0px;font-size:14px;color:#111;left:122.39999999999999px;">-</span>
<span class="t" style="letter-spacing:-0.114px;top:245.0px;font-size:14px;color:#111;left:133.29999999999998px;">Finanzanlage</span>
<svg style="left:46px;top:278.5px;" width="8" height="11" viewBox="0 0 8 11"><path d="M0.5 0.3v10.4l6.5-5.2z" fill="#6a6a6a"/></svg>
<svg style="left:68px;top:272.6px;" width="21" height="20" viewBox="0 0 21 20"><path d="M0.6 5.6 L9.9 0.6 L19.6 9.2 L7.8 14.4z" fill="#078787" stroke="#111" stroke-width="1" stroke-linejoin="round"/><path d="M0.6 5.6 L7.8 14.4 L7.8 19 L0.6 10.6z" fill="#078787" stroke="#111" stroke-width="1" stroke-linejoin="round"/><path d="M1.8 6.2 L8.4 14" stroke="#e8f4f4" stroke-width=".9"/><path d="M7.8 14.4 L19.6 9.2 L19.6 13.4 L7.8 19z" fill="#fff" stroke="#111" stroke-width="1" stroke-linejoin="round"/><path d="M9 16.6 L19 12" stroke="#555" stroke-width=".8" stroke-dasharray="2.2 1.2"/></svg>
<span class="t" style="letter-spacing:-0.386px;top:273.0px;font-size:14px;color:#111;left:93.9px;">150</span>
<span class="t" style="top:273.0px;font-size:14px;color:#111;left:122.39999999999999px;">-</span>
<span class="t" style="letter-spacing:-0.121px;top:273.0px;font-size:14px;color:#111;left:133.29999999999998px;">Mobile Sachanlagen</span>
<svg style="left:43.5px;top:307.5px;" width="11" height="7" viewBox="0 0 11 7"><path d="M0.3 0.3h10.4l-5.2 6.2z" fill="#6a6a6a"/></svg>
<svg style="left:68px;top:299.7px;" width="21" height="20" viewBox="0 0 21 20"><path d="M1.2 3 V12.2 L4.4 18.4 H19.2 V5.6 H16 V13 L7 15 L2.6 11.4 V2.4z" fill="#089292" stroke="#000" stroke-width="1" stroke-linejoin="round"/><path d="M17.6 7v9M5.5 16.8h12" stroke="#12e6e6" stroke-width=".9"/><path d="M1.6 2.6 L3.3 0.9 L7.6 5.8 V15 L2.6 11.4z" fill="#fff" stroke="#000" stroke-width="1" stroke-linejoin="round"/><path d="M2.3 3.2V11" stroke="#10caca" stroke-width="1"/><path d="M8.6 5.8 L15.2 2.4 L16.8 4.6 V12.6 L9 14.4z" fill="#fff" stroke="#222" stroke-width="1" stroke-linejoin="round"/><path d="M14.6 4.2 V11.8 L10 13" fill="none" stroke="#777" stroke-width="1.1"/></svg>
<span class="t" style="letter-spacing:-0.386px;top:300.0px;font-size:14px;color:#111;left:93.9px;">160</span>
<span class="t" style="top:300.0px;font-size:14px;color:#111;left:122.39999999999999px;">-</span>
<span class="t" style="letter-spacing:-0.111px;top:300.0px;font-size:14px;color:#111;left:133.29999999999998px;">Immobile Sachanlagen</span>
<svg style="left:46px;top:470.5px;" width="8" height="11" viewBox="0 0 8 11"><path d="M0.5 0.3v10.4l6.5-5.2z" fill="#6a6a6a"/></svg>
<svg style="left:68px;top:464.6px;" width="21" height="20" viewBox="0 0 21 20"><path d="M0.6 5.6 L9.9 0.6 L19.6 9.2 L7.8 14.4z" fill="#078787" stroke="#111" stroke-width="1" stroke-linejoin="round"/><path d="M0.6 5.6 L7.8 14.4 L7.8 19 L0.6 10.6z" fill="#078787" stroke="#111" stroke-width="1" stroke-linejoin="round"/><path d="M1.8 6.2 L8.4 14" stroke="#e8f4f4" stroke-width=".9"/><path d="M7.8 14.4 L19.6 9.2 L19.6 13.4 L7.8 19z" fill="#fff" stroke="#111" stroke-width="1" stroke-linejoin="round"/><path d="M9 16.6 L19 12" stroke="#555" stroke-width=".8" stroke-dasharray="2.2 1.2"/></svg>
<span class="t" style="letter-spacing:-0.386px;top:465.0px;font-size:14px;color:#111;left:93.9px;">170</span>
<span class="t" style="top:465.0px;font-size:14px;color:#111;left:122.39999999999999px;">-</span>
<span class="t" style="letter-spacing:-0.037px;top:465.0px;font-size:14px;color:#111;left:133.29999999999998px;">Inventar</span>
<svg style="left:46px;top:498.5px;" width="8" height="11" viewBox="0 0 8 11"><path d="M0.5 0.3v10.4l6.5-5.2z" fill="#6a6a6a"/></svg>
<svg style="left:68px;top:492.6px;" width="21" height="20" viewBox="0 0 21 20"><path d="M0.6 5.6 L9.9 0.6 L19.6 9.2 L7.8 14.4z" fill="#078787" stroke="#111" stroke-width="1" stroke-linejoin="round"/><path d="M0.6 5.6 L7.8 14.4 L7.8 19 L0.6 10.6z" fill="#078787" stroke="#111" stroke-width="1" stroke-linejoin="round"/><path d="M1.8 6.2 L8.4 14" stroke="#e8f4f4" stroke-width=".9"/><path d="M7.8 14.4 L19.6 9.2 L19.6 13.4 L7.8 19z" fill="#fff" stroke="#111" stroke-width="1" stroke-linejoin="round"/><path d="M9 16.6 L19 12" stroke="#555" stroke-width=".8" stroke-dasharray="2.2 1.2"/></svg>
<span class="t" style="letter-spacing:-0.386px;top:493.0px;font-size:14px;color:#111;left:93.9px;">190</span>
<span class="t" style="top:493.0px;font-size:14px;color:#111;left:122.39999999999999px;">-</span>
<span class="t" style="letter-spacing:-0.107px;top:493.0px;font-size:14px;color:#111;left:133.29999999999998px;">Leasing</span>
<svg style="left:46px;top:525.5px;" width="8" height="11" viewBox="0 0 8 11"><path d="M0.5 0.3v10.4l6.5-5.2z" fill="#6a6a6a"/></svg>
<svg style="left:68px;top:519.6px;" width="21" height="20" viewBox="0 0 21 20"><path d="M0.6 5.6 L9.9 0.6 L19.6 9.2 L7.8 14.4z" fill="#078787" stroke="#111" stroke-width="1" stroke-linejoin="round"/><path d="M0.6 5.6 L7.8 14.4 L7.8 19 L0.6 10.6z" fill="#078787" stroke="#111" stroke-width="1" stroke-linejoin="round"/><path d="M1.8 6.2 L8.4 14" stroke="#e8f4f4" stroke-width=".9"/><path d="M7.8 14.4 L19.6 9.2 L19.6 13.4 L7.8 19z" fill="#fff" stroke="#111" stroke-width="1" stroke-linejoin="round"/><path d="M9 16.6 L19 12" stroke="#555" stroke-width=".8" stroke-dasharray="2.2 1.2"/></svg>
<span class="t" style="letter-spacing:-0.386px;top:520.0px;font-size:14px;color:#111;left:93.9px;">197</span>
<span class="t" style="top:520.0px;font-size:14px;color:#111;left:122.39999999999999px;">-</span>
<span class="t" style="letter-spacing:-0.132px;top:520.0px;font-size:14px;color:#111;left:133.29999999999998px;">Anlagen im Bau</span>
<svg style="left:46px;top:553.5px;" width="8" height="11" viewBox="0 0 8 11"><path d="M0.5 0.3v10.4l6.5-5.2z" fill="#6a6a6a"/></svg>
<svg style="left:68px;top:547.6px;" width="21" height="20" viewBox="0 0 21 20"><path d="M0.6 5.6 L9.9 0.6 L19.6 9.2 L7.8 14.4z" fill="#078787" stroke="#111" stroke-width="1" stroke-linejoin="round"/><path d="M0.6 5.6 L7.8 14.4 L7.8 19 L0.6 10.6z" fill="#078787" stroke="#111" stroke-width="1" stroke-linejoin="round"/><path d="M1.8 6.2 L8.4 14" stroke="#e8f4f4" stroke-width=".9"/><path d="M7.8 14.4 L19.6 9.2 L19.6 13.4 L7.8 19z" fill="#fff" stroke="#111" stroke-width="1" stroke-linejoin="round"/><path d="M9 16.6 L19 12" stroke="#555" stroke-width=".8" stroke-dasharray="2.2 1.2"/></svg>
<span class="t" style="letter-spacing:-0.386px;top:548.0px;font-size:14px;color:#111;left:93.9px;">198</span>
<span class="t" style="top:548.0px;font-size:14px;color:#111;left:122.39999999999999px;">-</span>
<span class="t" style="letter-spacing:-0.124px;top:548.0px;font-size:14px;color:#111;left:133.29999999999998px;">Plananlagen</span>
<svg style="left:46px;top:443.5px;" width="8" height="11" viewBox="0 0 8 11"><path d="M0.5 0.3v10.4l6.5-5.2z" fill="#6a6a6a"/></svg>
<svg style="left:68px;top:437.6px;" width="21" height="20" viewBox="0 0 21 20"><path d="M0.6 5.6 L9.9 0.6 L19.6 9.2 L7.8 14.4z" fill="#078787" stroke="#111" stroke-width="1" stroke-linejoin="round"/><path d="M0.6 5.6 L7.8 14.4 L7.8 19 L0.6 10.6z" fill="#078787" stroke="#111" stroke-width="1" stroke-linejoin="round"/><path d="M1.8 6.2 L8.4 14" stroke="#e8f4f4" stroke-width=".9"/><path d="M7.8 14.4 L19.6 9.2 L19.6 13.4 L7.8 19z" fill="#fff" stroke="#111" stroke-width="1" stroke-linejoin="round"/><path d="M9 16.6 L19 12" stroke="#555" stroke-width=".8" stroke-dasharray="2.2 1.2"/></svg>
<span class="t" style="letter-spacing:-0.219px;top:438.0px;font-size:14px;color:#111;left:93.9px;">160.S</span>
<span class="t" style="top:438.0px;font-size:14px;color:#111;left:135.4px;">-</span>
<span class="t" style="letter-spacing:-0.106px;top:438.0px;font-size:14px;color:#111;left:146.1px;">Software</span>
<svg style="left:46px;top:580.5px;" width="8" height="11" viewBox="0 0 8 11"><path d="M0.5 0.3v10.4l6.5-5.2z" fill="#6a6a6a"/></svg>
<svg style="left:68px;top:574.6px;" width="21" height="20" viewBox="0 0 21 20"><path d="M0.6 5.6 L9.9 0.6 L19.6 9.2 L7.8 14.4z" fill="#078787" stroke="#111" stroke-width="1" stroke-linejoin="round"/><path d="M0.6 5.6 L7.8 14.4 L7.8 19 L0.6 10.6z" fill="#078787" stroke="#111" stroke-width="1" stroke-linejoin="round"/><path d="M1.8 6.2 L8.4 14" stroke="#e8f4f4" stroke-width=".9"/><path d="M7.8 14.4 L19.6 9.2 L19.6 13.4 L7.8 19z" fill="#fff" stroke="#111" stroke-width="1" stroke-linejoin="round"/><path d="M9 16.6 L19 12" stroke="#555" stroke-width=".8" stroke-dasharray="2.2 1.2"/></svg>
<span class="t" style="letter-spacing:-0.562px;top:575.0px;font-size:14px;color:#111;left:93.9px;">Z</span>
<span class="t" style="top:575.0px;font-size:14px;color:#111;left:107.89999999999999px;">-</span>
<span class="t" style="letter-spacing:-0.099px;top:575.0px;font-size:14px;color:#111;left:118.60000000000001px;">Anlagegruppen</span>
<svg style="left:96px;top:328.8px;" width="16" height="18" viewBox="0 0 16 18"><path d="M1 1h9.2l4.8 4.8v11.4h-14z" fill="none" stroke="#2a2e30" stroke-width="1.3" stroke-linejoin="round"/><path d="M10.2 1v4.8h4.8z" fill="#555" stroke="#2a2e30" stroke-width="1"/><path d="M4 5.8h5" stroke="#2222ff" stroke-width="1.3"/><path d="M4 8.4h7.6M4 11h7.6M4 13.6h7.6" stroke="#3a3af8" stroke-width="1.4"/></svg>
<span class="t" style="letter-spacing:-0.347px;top:328.0px;font-size:14px;color:#111;left:120.1px;">16001</span>
<span class="t" style="top:328.0px;font-size:14px;color:#111;left:164.10000000000002px;">-</span>
<span class="t" style="letter-spacing:-0.146px;top:328.0px;font-size:14px;color:#111;left:174.79999999999998px;">Gebäude Büro 1</span>
<svg style="left:96px;top:355.8px;" width="16" height="18" viewBox="0 0 16 18"><path d="M1 1h9.2l4.8 4.8v11.4h-14z" fill="none" stroke="#2a2e30" stroke-width="1.3" stroke-linejoin="round"/><path d="M10.2 1v4.8h4.8z" fill="#555" stroke="#2a2e30" stroke-width="1"/><path d="M4 5.8h5" stroke="#2222ff" stroke-width="1.3"/><path d="M4 8.4h7.6M4 11h7.6M4 13.6h7.6" stroke="#3a3af8" stroke-width="1.4"/></svg>
<span class="t" style="letter-spacing:-0.347px;top:355.0px;font-size:14px;color:#111;left:120.1px;">15101</span>
<span class="t" style="top:355.0px;font-size:14px;color:#111;left:164.10000000000002px;">-</span>
<span class="t" style="letter-spacing:0.002px;top:355.0px;font-size:14px;color:#111;left:174.79999999999998px;">IT-Raum</span>
<svg style="left:96px;top:383.8px;" width="16" height="18" viewBox="0 0 16 18"><path d="M1 1h9.2l4.8 4.8v11.4h-14z" fill="none" stroke="#2a2e30" stroke-width="1.3" stroke-linejoin="round"/><path d="M10.2 1v4.8h4.8z" fill="#555" stroke="#2a2e30" stroke-width="1"/><path d="M4 5.8h5" stroke="#2222ff" stroke-width="1.3"/><path d="M4 8.4h7.6M4 11h7.6M4 13.6h7.6" stroke="#3a3af8" stroke-width="1.4"/></svg>
<span class="t" style="letter-spacing:-0.231px;top:383.0px;font-size:14px;color:#111;left:120.1px;">1590000</span>
<span class="t" style="top:383.0px;font-size:14px;color:#111;left:179.10000000000002px;">-</span>
<span class="t" style="letter-spacing:-0.091px;top:383.0px;font-size:14px;color:#111;left:190.2px;">Building</span>
<svg style="left:94px;top:409.6px;" width="21" height="20" viewBox="0 0 21 20"><path d="M0.6 5.6 L9.9 0.6 L19.6 9.2 L7.8 14.4z" fill="#8c0c0c" stroke="#111" stroke-width="1" stroke-linejoin="round"/><path d="M0.6 5.6 L7.8 14.4 L7.8 19 L0.6 10.6z" fill="#8c0c0c" stroke="#111" stroke-width="1" stroke-linejoin="round"/><path d="M1.8 6.2 L8.4 14" stroke="#e8f4f4" stroke-width=".9"/><path d="M7.8 14.4 L19.6 9.2 L19.6 13.4 L7.8 19z" fill="#fff" stroke="#111" stroke-width="1" stroke-linejoin="round"/><path d="M9 16.6 L19 12" stroke="#555" stroke-width=".8" stroke-dasharray="2.2 1.2"/></svg>
<span class="t" style="letter-spacing:-0.186px;top:410.0px;font-size:14px;color:#111;left:120.1px;">160</span>
<span class="t" style="top:410.0px;font-size:14px;color:#111;left:148.70000000000002px;">-</span>
<span class="t" style="letter-spacing:-0.111px;top:410.0px;font-size:14px;color:#111;left:159.0px;">Immobile Sachanlagen</span>
<svg style="left:204px;top:339px;" width="14" height="21" viewBox="0 0 14 21"><path d="M1 1v15.5l3.8-3.6 2.7 6.2 2.6-1.1-2.7-6.1h5.2z" fill="#fff" stroke="#111" stroke-width="1"/></svg>
<div style="left:445px;top:560.5px;width:3px;height:3px;background:#8a8f9c;border-radius:50%;"></div>
<div style="left:445px;top:568px;width:3px;height:3px;background:#8a8f9c;border-radius:50%;"></div>
<div style="left:445px;top:575.5px;width:3px;height:3px;background:#8a8f9c;border-radius:50%;"></div>
<div style="left:449px;top:212px;width:1469px;height:1px;background:#b4b4b4;"></div>
<div style="left:671px;top:213px;width:914px;height:30px;background:#c7c9d2;"></div>
<div style="left:671px;top:213px;width:187px;height:27px;background:#e8e9ee;border-left:1px solid #f6f6f8;border-top:1px solid #d6d8df;border-right:1px solid #c6c8d2;"></div>
<span class="t" style="letter-spacing:-0.22px;top:217.5px;font-size:15.5px;color:#111;left:692.5px;">Zusatzinformationen</span>
<div style="left:859px;top:213px;width:106px;height:27px;background:#e8e9ee;border-left:1px solid #f6f6f8;border-top:1px solid #d6d8df;border-right:1px solid #c6c8d2;"></div>
<span class="t" style="letter-spacing:-0.492px;top:217.5px;font-size:15.5px;color:#111;left:879.5px;">Bilanziell</span>
<div style="left:966px;top:213px;width:141px;height:27px;background:#e8e9ee;border-left:1px solid #f6f6f8;border-top:1px solid #d6d8df;border-right:1px solid #c6c8d2;"></div>
<span class="t" style="letter-spacing:-0.393px;top:217.5px;font-size:15.5px;color:#111;left:987px;">Kalkulatorisch</span>
<div style="left:1108px;top:213px;width:117px;height:27px;background:#e8e9ee;border-left:1px solid #f6f6f8;border-top:1px solid #d6d8df;border-right:1px solid #c6c8d2;"></div>
<span class="t" style="letter-spacing:-0.176px;top:217.5px;font-size:15.5px;color:#111;left:1128.75px;">Individuell</span>
<div style="left:1226px;top:213px;width:135px;height:27px;background:#e8e9ee;border-left:1px solid #f6f6f8;border-top:1px solid #d6d8df;border-right:1px solid #c6c8d2;"></div>
<span class="t" style="letter-spacing:-0.499px;top:217.5px;font-size:15.5px;color:#111;left:1246.75px;">Versicherung</span>
<div style="left:1362px;top:213px;width:223px;height:27px;background:#e8e9ee;border-left:1px solid #f6f6f8;border-top:1px solid #d6d8df;border-right:1px solid #c6c8d2;"></div>
<span class="t" style="letter-spacing:-0.111px;top:217.5px;font-size:15.5px;color:#111;left:1382.5px;">Individuelle Informationen</span>
<div style="left:449px;top:212px;width:222px;height:31px;background:#fff;border-top:3px solid #073d7a;border-left:1px solid #c6c8d2;"></div>
<span class="t" style="letter-spacing:-0.158px;top:219.5px;font-size:15.5px;color:#111;left:470px;">Allgemeine Informationen</span>
<div style="left:461px;top:260px;width:713px;height:402px;border:1px solid #a7abbb;border-radius:4px;"></div>
<div style="left:469px;top:259px;width:151px;height:3px;background:#fff;"></div>
<span class="t" style="letter-spacing:-0.365px;top:249.5px;font-size:15.5px;color:#111;left:476.75px;">Basisinformationen</span>
<div style="left:1187px;top:260px;width:717px;height:135px;border:1px solid #a7abbb;border-radius:4px;"></div>
<div style="left:1194.5px;top:259px;width:98.0px;height:3px;background:#fff;"></div>
<span class="t" style="letter-spacing:-0.248px;top:249.5px;font-size:15.5px;color:#111;left:1202px;">Kontierung</span>
<div style="left:1187px;top:413px;width:717px;height:166px;border:1px solid #a7abbb;border-radius:4px;"></div>
<div style="left:1194.5px;top:412px;width:155.5px;height:3px;background:#fff;"></div>
<span class="t" style="letter-spacing:-0.239px;top:403.5px;font-size:15.5px;color:#111;left:1202px;">Gruppenzuordnung</span>
<span class="t" style="letter-spacing:-0.418px;top:274.5px;font-size:15.5px;color:#111;left:472.5px;">Variante</span>
<div class="fd" style="left:719px;top:270px;width:222px;height:28px;"></div>
<span class="t" style="top:274.5px;font-size:15.5px;color:#a3a3ad;left:727.5px;">0</span>
<svg style="left:926px;top:281px;" width="11" height="7" viewBox="0 0 11 7"><path d="M0.2 0.3h10.6l-5.3 6.2z" fill="#7c7c84"/></svg>
<span class="t" style="letter-spacing:-0.641px;top:302.5px;font-size:15.5px;color:#111;left:472.5px;">Stufe</span>
<div style="left:717px;top:299px;width:226px;height:25px;border:1px solid #b4b7bb;background:#f3f3f4;"></div>
<span class="t" style="letter-spacing:-0.334px;top:302.5px;font-size:15.5px;color:#8c8c92;left:725px;">Hauptanlage</span>
<span class="t" style="letter-spacing:-0.195px;top:329.5px;font-size:15.5px;color:#111;left:472.5px;">Nummer</span>
<div class="fd" style="left:719px;top:325px;width:222px;height:28px;"></div>
<span class="t" style="letter-spacing:-0.822px;top:329.5px;font-size:15.5px;color:#a3a3ad;left:725.5px;">16001</span>
<div class="fd" style="left:944px;top:325px;width:223px;height:28px;"></div>
<span class="t" style="top:329.5px;font-size:15.5px;color:#a3a3ad;left:950.75px;">0</span>
<span class="t" style="letter-spacing:-0.659px;top:359.5px;font-size:15.5px;color:#111;left:472.5px;">Status</span>
<div class="f" style="left:719px;top:355px;width:448px;height:28px;"></div>
<span class="t" style="letter-spacing:-0.207px;top:359.5px;font-size:15.5px;color:#000;left:727.5px;">Aktiv - In Betrieb</span>
<svg style="left:1150.5px;top:365.3px;" width="12" height="8" viewBox="0 0 12 8"><path d="M0.7 1l5.3 5 5.3-5" fill="none" stroke="#8a8fa1" stroke-width="1.05"/></svg>
<span class="t" style="letter-spacing:-0.534px;top:389.5px;font-size:15.5px;color:#111;left:472.5px;">Bezeichnung</span>
<div class="f" style="left:719px;top:385px;width:448px;height:28px;"></div>
<span class="t" style="letter-spacing:-0.573px;top:389.5px;font-size:15.5px;color:#000;left:725px;">Gebäude Büro 1</span>
<span class="t" style="letter-spacing:-0.524px;top:419.5px;font-size:15.5px;color:#111;left:472.5px;">Bezeichnung 2</span>
<div class="f" style="left:719px;top:415px;width:422px;height:28px;"></div>
<svg style="left:1125.0px;top:425.3px;" width="12" height="8" viewBox="0 0 12 8"><path d="M0.7 1l5.3 5 5.3-5" fill="none" stroke="#8a8fa1" stroke-width="1.05"/></svg>
<div style="left:1142px;top:416px;width:25px;height:25px;border:1px solid #a9adbd;background:#fff;"></div>
<svg style="left:1143px;top:417px;" width="23" height="23" viewBox="0 0 23 23"><path d="M5 15.6 L16.4 4.2 L19.2 7 L7.8 18.4z" fill="#f2bc2e" stroke="#c08a1c" stroke-width=".7"/><path d="M6.4 15.8 L17 5.2" stroke="#fbe08a" stroke-width="1.3"/><path d="M16.4 4.2 L17.6 3 L20.4 5.8 L19.2 7z" fill="#f4f4f4" stroke="#c8c8c8" stroke-width=".5"/><circle cx="19.6" cy="3.8" r="1.9" fill="#e02a3c"/><path d="M2.6 20.8 L5 15.6 L7.8 18.4z" fill="#f3dfb8" stroke="#c9a46a" stroke-width=".5"/><path d="M2.6 20.8 L3.6 18.6 L4.8 19.8z" fill="#222"/></svg>
<span class="t" style="letter-spacing:-0.323px;top:450.5px;font-size:15.5px;color:#111;left:472.5px;">Anschaffungsdatum</span>
<div class="f" style="left:719px;top:445px;width:162px;height:30px;border-radius:3px;"></div>
<span class="t" style="letter-spacing:-0.683px;top:450.5px;font-size:15.5px;color:#000;left:775px;">01.01.2009</span>
<div style="left:852px;top:448px;width:27px;height:25px;border:1px solid #b9b9bc;background:#fbfbfc;border-radius:2.5px;"></div>
<svg style="left:857px;top:451px;" width="17" height="18" viewBox="0 0 17 18"><rect x="0.5" y="0.5" width="15.4" height="17" fill="#f1f1f3" stroke="#b2b2b6" stroke-width=".9"/><rect x="0.3" y="0.2" width="15.8" height="6.6" fill="#4565b4"/><path d="M2 3.4h4.6M9.6 3.4h4" stroke="#b9c8ea" stroke-width="1.4"/><text x="8.2" y="15.8" font-family="Liberation Sans,sans-serif" font-size="11.6" font-weight="700" text-anchor="middle" fill="#303030" letter-spacing="0.3">22</text></svg>
<span class="t" style="letter-spacing:-0.385px;top:481.5px;font-size:15.5px;color:#111;left:472.5px;">Strichcode-Typ</span>
<div class="f" style="left:719px;top:478px;width:448px;height:27px;"></div>
<svg style="left:1150.5px;top:487.3px;" width="12" height="8" viewBox="0 0 12 8"><path d="M0.7 1l5.3 5 5.3-5" fill="none" stroke="#8a8fa1" stroke-width="1.05"/></svg>
<span class="t" style="letter-spacing:-0.448px;top:511.5px;font-size:15.5px;color:#111;left:472.5px;">Strichcode</span>
<div class="f" style="left:719px;top:508px;width:448px;height:27px;"></div>
<span class="t" style="letter-spacing:-0.24px;top:541.5px;font-size:15.5px;color:#111;left:472.5px;">Inventarnummer</span>
<div class="f" style="left:719px;top:538px;width:448px;height:27px;"></div>
<span class="t" style="letter-spacing:-0.451px;top:571.5px;font-size:15.5px;color:#111;left:472.5px;">Seriennummer</span>
<div class="f" style="left:719px;top:568px;width:448px;height:27px;"></div>
<span class="t" style="letter-spacing:-0.455px;top:601.5px;font-size:15.5px;color:#111;left:472.5px;">Sachbearbeiter</span>
<div class="f" style="left:719px;top:598px;width:448px;height:27px;"></div>
<svg style="left:1150.5px;top:607.3px;" width="12" height="8" viewBox="0 0 12 8"><path d="M0.7 1l5.3 5 5.3-5" fill="none" stroke="#8a8fa1" stroke-width="1.05"/></svg>
<span class="t" style="letter-spacing:-0.206px;top:631.5px;font-size:15.5px;color:#111;left:472.5px;">Anlagentyp</span>
<div class="f" style="left:719px;top:628px;width:448px;height:27px;"></div>
<svg style="left:1150.5px;top:637.3px;" width="12" height="8" viewBox="0 0 12 8"><path d="M0.7 1l5.3 5 5.3-5" fill="none" stroke="#8a8fa1" stroke-width="1.05"/></svg>
<span class="t" style="letter-spacing:-0.341px;top:631.5px;font-size:15.5px;color:#000;left:727.5px;">Unbeweglich</span>
<span class="t" style="letter-spacing:-0.176px;top:274.5px;font-size:15.5px;color:#111;left:1198.25px;">Anlagekonto</span>
<div class="f" style="left:1444px;top:270px;width:424px;height:28px;"></div>
<svg style="left:1851.5px;top:279.8px;" width="12" height="8" viewBox="0 0 12 8"><path d="M0.7 1l5.3 5 5.3-5" fill="none" stroke="#8a8fa1" stroke-width="1.05"/></svg>
<div style="left:1869px;top:270px;width:27px;height:28px;border:1px solid #a9adbd;background:#fff;"></div>
<svg style="left:1872px;top:273px;" width="21" height="21" viewBox="0 0 21 21"><path d="M11.6 11.8l6.6 6.8" stroke="#3c69b0" stroke-width="3" stroke-linecap="round"/><path d="M11.2 11.2l6.4 6.6" stroke="#86a8dc" stroke-width="1" stroke-linecap="round"/><circle cx="8" cy="8" r="5.3" fill="#1e86ee" stroke="#a3acba" stroke-width="1.1"/><circle cx="8.8" cy="9" r="3" fill="#2fc4f4"/><circle cx="6" cy="5.8" r="2" fill="#d8ecff"/></svg>
<span class="t" style="letter-spacing:-0.434px;top:304.5px;font-size:15.5px;color:#111;left:1198.25px;">Kostenstelle</span>
<div class="f" style="left:1444px;top:300px;width:424px;height:28px;"></div>
<svg style="left:1851.5px;top:309.8px;" width="12" height="8" viewBox="0 0 12 8"><path d="M0.7 1l5.3 5 5.3-5" fill="none" stroke="#8a8fa1" stroke-width="1.05"/></svg>
<div style="left:1869px;top:300px;width:27px;height:28px;border:1px solid #a9adbd;background:#fff;"></div>
<svg style="left:1872px;top:303px;" width="21" height="21" viewBox="0 0 21 21"><path d="M11.6 11.8l6.6 6.8" stroke="#3c69b0" stroke-width="3" stroke-linecap="round"/><path d="M11.2 11.2l6.4 6.6" stroke="#86a8dc" stroke-width="1" stroke-linecap="round"/><circle cx="8" cy="8" r="5.3" fill="#1e86ee" stroke="#a3acba" stroke-width="1.1"/><circle cx="8.8" cy="9" r="3" fill="#2fc4f4"/><circle cx="6" cy="5.8" r="2" fill="#d8ecff"/></svg>
<span class="t" style="letter-spacing:-0.321px;top:334.5px;font-size:15.5px;color:#111;left:1198.25px;">Projekt</span>
<div class="f" style="left:1444px;top:330px;width:424px;height:28px;"></div>
<svg style="left:1851.5px;top:339.8px;" width="12" height="8" viewBox="0 0 12 8"><path d="M0.7 1l5.3 5 5.3-5" fill="none" stroke="#8a8fa1" stroke-width="1.05"/></svg>
<div style="left:1869px;top:330px;width:27px;height:28px;border:1px solid #a9adbd;background:#fff;"></div>
<svg style="left:1872px;top:333px;" width="21" height="21" viewBox="0 0 21 21"><path d="M11.6 11.8l6.6 6.8" stroke="#3c69b0" stroke-width="3" stroke-linecap="round"/><path d="M11.2 11.2l6.4 6.6" stroke="#86a8dc" stroke-width="1" stroke-linecap="round"/><circle cx="8" cy="8" r="5.3" fill="#1e86ee" stroke="#a3acba" stroke-width="1.1"/><circle cx="8.8" cy="9" r="3" fill="#2fc4f4"/><circle cx="6" cy="5.8" r="2" fill="#d8ecff"/></svg>
<span class="t" style="letter-spacing:-0.221px;top:364.5px;font-size:15.5px;color:#111;left:1198.25px;">Kontierungsgruppe</span>
<div class="f" style="left:1444px;top:360px;width:426px;height:28px;"></div>
<svg style="left:1853.8px;top:369.8px;" width="12" height="8" viewBox="0 0 12 8"><path d="M0.7 1l5.3 5 5.3-5" fill="none" stroke="#8a8fa1" stroke-width="1.05"/></svg>
<div style="left:1871px;top:361px;width:25px;height:25px;border:1px solid #a9adbd;background:#fff;"></div>
<svg style="left:1872px;top:362px;" width="23" height="23" viewBox="0 0 23 23"><path d="M5 15.6 L16.4 4.2 L19.2 7 L7.8 18.4z" fill="#f2bc2e" stroke="#c08a1c" stroke-width=".7"/><path d="M6.4 15.8 L17 5.2" stroke="#fbe08a" stroke-width="1.3"/><path d="M16.4 4.2 L17.6 3 L20.4 5.8 L19.2 7z" fill="#f4f4f4" stroke="#c8c8c8" stroke-width=".5"/><circle cx="19.6" cy="3.8" r="1.9" fill="#e02a3c"/><path d="M2.6 20.8 L5 15.6 L7.8 18.4z" fill="#f3dfb8" stroke="#c9a46a" stroke-width=".5"/><path d="M2.6 20.8 L3.6 18.6 L4.8 19.8z" fill="#222"/></svg>
<span class="t" style="letter-spacing:-0.821px;top:274.5px;font-size:15.5px;color:#000;left:1453.8px;">1600</span>
<span class="t" style="letter-spacing:-0.324px;top:274.5px;font-size:15.5px;color:#000;left:1503.2px;">Betriebsgebäude (Indirekt 1601)</span>
<span class="t" style="letter-spacing:-0.199px;top:274.5px;font-size:15.5px;color:#000;left:1732.7px;">Aktiv</span>
<span class="t" style="letter-spacing:-0.821px;top:304.5px;font-size:15.5px;color:#000;left:1453.8px;">1216</span>
<span class="t" style="letter-spacing:-0.17px;top:304.5px;font-size:15.5px;color:#000;left:1503.2px;">Vertrieb/Verwaltung</span>
<span class="t" style="letter-spacing:-1.2px;top:304.5px;font-size:15.5px;color:#000;left:1653.2px;">KST</span>
<span class="t" style="top:364.5px;font-size:15.5px;color:#000;left:1453.5px;">9</span>
<div style="left:1478px;top:361px;width:359px;height:26px;overflow:hidden;"><span class="t" style="letter-spacing:-0.637px;left:0.9px;top:3.5px;font-size:15.5px;color:#000;">IMMOLU: B_1601/6930; K_69/KST1113; I_1601/6930_IAS</span></div>
<span class="t" style="letter-spacing:-0.224px;top:428.5px;font-size:15.5px;color:#111;left:1198.25px;">Anlagengruppe</span>
<div class="f" style="left:1444px;top:424px;width:426px;height:27px;"></div>
<svg style="left:1853.8px;top:433.3px;" width="12" height="8" viewBox="0 0 12 8"><path d="M0.7 1l5.3 5 5.3-5" fill="none" stroke="#8a8fa1" stroke-width="1.05"/></svg>
<div style="left:1871px;top:425px;width:25px;height:25px;border:1px solid #a9adbd;background:#fff;"></div>
<svg style="left:1872px;top:426px;" width="23" height="23" viewBox="0 0 23 23"><path d="M5 15.6 L16.4 4.2 L19.2 7 L7.8 18.4z" fill="#f2bc2e" stroke="#c08a1c" stroke-width=".7"/><path d="M6.4 15.8 L17 5.2" stroke="#fbe08a" stroke-width="1.3"/><path d="M16.4 4.2 L17.6 3 L20.4 5.8 L19.2 7z" fill="#f4f4f4" stroke="#c8c8c8" stroke-width=".5"/><circle cx="19.6" cy="3.8" r="1.9" fill="#e02a3c"/><path d="M2.6 20.8 L5 15.6 L7.8 18.4z" fill="#f3dfb8" stroke="#c9a46a" stroke-width=".5"/><path d="M2.6 20.8 L3.6 18.6 L4.8 19.8z" fill="#222"/></svg>
<span class="t" style="letter-spacing:-0.295px;top:458.5px;font-size:15.5px;color:#111;left:1198.25px;">Standort</span>
<div class="f" style="left:1444px;top:454px;width:426px;height:27px;"></div>
<svg style="left:1853.8px;top:463.3px;" width="12" height="8" viewBox="0 0 12 8"><path d="M0.7 1l5.3 5 5.3-5" fill="none" stroke="#8a8fa1" stroke-width="1.05"/></svg>
<div style="left:1871px;top:455px;width:25px;height:25px;border:1px solid #a9adbd;background:#fff;"></div>
<svg style="left:1872px;top:456px;" width="23" height="23" viewBox="0 0 23 23"><path d="M5 15.6 L16.4 4.2 L19.2 7 L7.8 18.4z" fill="#f2bc2e" stroke="#c08a1c" stroke-width=".7"/><path d="M6.4 15.8 L17 5.2" stroke="#fbe08a" stroke-width="1.3"/><path d="M16.4 4.2 L17.6 3 L20.4 5.8 L19.2 7z" fill="#f4f4f4" stroke="#c8c8c8" stroke-width=".5"/><circle cx="19.6" cy="3.8" r="1.9" fill="#e02a3c"/><path d="M2.6 20.8 L5 15.6 L7.8 18.4z" fill="#f3dfb8" stroke="#c9a46a" stroke-width=".5"/><path d="M2.6 20.8 L3.6 18.6 L4.8 19.8z" fill="#222"/></svg>
<span class="t" style="letter-spacing:-0.373px;top:488.5px;font-size:15.5px;color:#111;left:1198.25px;">Kategorie</span>
<div class="f" style="left:1444px;top:484px;width:426px;height:27px;"></div>
<svg style="left:1853.8px;top:493.3px;" width="12" height="8" viewBox="0 0 12 8"><path d="M0.7 1l5.3 5 5.3-5" fill="none" stroke="#8a8fa1" stroke-width="1.05"/></svg>
<div style="left:1871px;top:485px;width:25px;height:25px;border:1px solid #a9adbd;background:#fff;"></div>
<svg style="left:1872px;top:486px;" width="23" height="23" viewBox="0 0 23 23"><path d="M5 15.6 L16.4 4.2 L19.2 7 L7.8 18.4z" fill="#f2bc2e" stroke="#c08a1c" stroke-width=".7"/><path d="M6.4 15.8 L17 5.2" stroke="#fbe08a" stroke-width="1.3"/><path d="M16.4 4.2 L17.6 3 L20.4 5.8 L19.2 7z" fill="#f4f4f4" stroke="#c8c8c8" stroke-width=".5"/><circle cx="19.6" cy="3.8" r="1.9" fill="#e02a3c"/><path d="M2.6 20.8 L5 15.6 L7.8 18.4z" fill="#f3dfb8" stroke="#c9a46a" stroke-width=".5"/><path d="M2.6 20.8 L3.6 18.6 L4.8 19.8z" fill="#222"/></svg>
<span class="t" style="letter-spacing:-0.381px;top:518.5px;font-size:15.5px;color:#111;left:1198.25px;">Invest. Projekt</span>
<div class="f" style="left:1444px;top:514px;width:426px;height:27px;"></div>
<svg style="left:1853.8px;top:523.3px;" width="12" height="8" viewBox="0 0 12 8"><path d="M0.7 1l5.3 5 5.3-5" fill="none" stroke="#8a8fa1" stroke-width="1.05"/></svg>
<div style="left:1871px;top:515px;width:25px;height:25px;border:1px solid #a9adbd;background:#fff;"></div>
<svg style="left:1872px;top:516px;" width="23" height="23" viewBox="0 0 23 23"><path d="M5 15.6 L16.4 4.2 L19.2 7 L7.8 18.4z" fill="#f2bc2e" stroke="#c08a1c" stroke-width=".7"/><path d="M6.4 15.8 L17 5.2" stroke="#fbe08a" stroke-width="1.3"/><path d="M16.4 4.2 L17.6 3 L20.4 5.8 L19.2 7z" fill="#f4f4f4" stroke="#c8c8c8" stroke-width=".5"/><circle cx="19.6" cy="3.8" r="1.9" fill="#e02a3c"/><path d="M2.6 20.8 L5 15.6 L7.8 18.4z" fill="#f3dfb8" stroke="#c9a46a" stroke-width=".5"/><path d="M2.6 20.8 L3.6 18.6 L4.8 19.8z" fill="#222"/></svg>
<span class="t" style="letter-spacing:-0.527px;top:548.5px;font-size:15.5px;color:#111;left:1198.25px;">Baujahr</span>
<div class="f" style="left:1444px;top:544px;width:163px;height:27px;border-radius:3px;"></div>
<span class="t" style="top:548.5px;font-size:15.5px;color:#000;right:321.5px;">0</span>
<span class="t" style="letter-spacing:-0.526px;top:428.5px;font-size:15.5px;color:#000;left:1453.5px;">IMMOB</span>
<span class="t" style="letter-spacing:-0.145px;top:428.5px;font-size:15.5px;color:#000;left:1522px;">Immobilien</span>
<span class="t" style="letter-spacing:-1.186px;top:458.5px;font-size:15.5px;color:#000;left:1453.5px;">ZH</span>
<span class="t" style="letter-spacing:-0.413px;top:458.5px;font-size:15.5px;color:#000;left:1490.2px;">Zürich</span>
<div class="btn" style="left:9px;top:928px;width:37px;height:27px;"></div>
<svg style="left:17px;top:932px;" width="22" height="19" viewBox="0 0 22 19"><rect x="5" y="0.6" width="2.2" height="2" fill="#4a7af0"/><rect x="9.4" y="0.6" width="2.2" height="2" fill="#4a7af0"/><path d="M2.2 6 L4.4 2.4 L13 2.2 L20 3.6 L20.4 12.6 L11.6 16 L1.4 15 L1 9.4z" fill="#f4f2f0" stroke="#b9b4b0" stroke-width=".5"/><path d="M3 6.2 L4.8 3.4 L11 3.4 L11.4 7z" fill="#23262e"/><path d="M12.4 4 L15 4.4 V7.4 L12.6 7.2z" fill="#3a3f4c"/><path d="M11.6 7.6 L20.2 5.4 V8.4 L11.8 11z" fill="#e23a2c"/><path d="M1.2 8 L11.6 8.2 V11.4 L1 10.6z" fill="#e23a2c"/><path d="M16.4 4.6h2.4M17.6 3.6v2.2" stroke="#e23a2c" stroke-width="1"/><path d="M1.2 11 L11.4 11.8 V15.6 L1.6 14.8z" fill="#cfc4b0"/><path d="M2.6 12 L10.2 12.6 V14 L2.6 13.4z" fill="#2a2c33"/><ellipse cx="11.2" cy="15.8" rx="1.6" ry="2" fill="#1c1c20"/><ellipse cx="18.4" cy="12.8" rx="1.3" ry="1.8" fill="#1c1c20"/><path d="M1.6 14.8h9.6v1.6h-9z" fill="#2c2c30"/></svg>
<span class="t" style="letter-spacing:-0.155px;top:932.5px;font-size:15.5px;color:#111;left:56px;">Gruppennummer / Anlagenummer</span>
<div style="left:300px;top:928px;width:150px;height:27px;border:1px solid #9297ab;background:#fff;"></div>
<div class="btn" style="left:456px;top:928px;width:28px;height:27px;"></div>
<svg style="left:461px;top:932px;" width="17" height="20" viewBox="0 0 17 20"><path d="M5.5 0.8h10.3v18.4h-15v-13z" fill="#fdfdfd" stroke="#8a8a8a" stroke-width="1"/><path d="M5.5 0.8v5h-4.7" fill="#f0f0f0" stroke="#8a8a8a" stroke-width=".9"/><path d="M0.8 18.6h15" stroke="#7a7a7a" stroke-width="1.2"/><path d="M5.6 8.4h8M5.6 12h8M5.6 15.6h8" stroke="#777" stroke-width="1.3"/><path d="M2.8 8.4h1.4M2.8 12h1.4M2.8 15.6h1.4" stroke="#e8404a" stroke-width="1.4"/></svg>
<div style="left:9px;top:966px;width:16px;height:16px;border:1px solid #8f94a8;background:#fff;"></div>
<svg style="left:9px;top:966px;" width="16" height="16" viewBox="0 0 16 16"><path d="M2 8l4.4 4.5 8.2-8" fill="none" stroke="#0a3d7b" stroke-width="2.25"/></svg>
<span class="t" style="letter-spacing:-0.658px;top:964.5px;font-size:15.5px;color:#111;left:38px;">Plananlage</span>
<div style="left:130px;top:966px;width:16px;height:16px;border:1px solid #8f94a8;background:#fff;"></div>
<svg style="left:130px;top:966px;" width="16" height="16" viewBox="0 0 16 16"><path d="M2 8l4.4 4.5 8.2-8" fill="none" stroke="#0a3d7b" stroke-width="2.25"/></svg>
<span class="t" style="letter-spacing:-0.159px;top:964.5px;font-size:15.5px;color:#111;left:159px;">Aktiv - in Betrieb</span>
<div style="left:289px;top:966px;width:16px;height:16px;border:1px solid #8f94a8;background:#fff;"></div>
<span class="t" style="letter-spacing:-0.447px;top:964.5px;font-size:15.5px;color:#111;left:318px;">Anlage im Bau</span>
<div style="left:433.5px;top:966px;width:16px;height:16px;border:1px solid #8f94a8;background:#fff;"></div>
<span class="t" style="letter-spacing:-0.296px;top:964.5px;font-size:15.5px;color:#111;left:462.5px;">Deaktiviert - Ausser Betrieb</span>
<div style="left:663px;top:966px;width:16px;height:16px;border:1px solid #8f94a8;background:#fff;"></div>
<span class="t" style="letter-spacing:-0.538px;top:964.5px;font-size:15.5px;color:#111;left:691.7px;">Ausgeschieden</span>
<div class="btn" style="left:874px;top:959px;width:85px;height:30px;"></div>
<span class="t" style="letter-spacing:-0.393px;top:965.5px;font-size:16.7px;color:#111;left:883.3px;">Explorer</span>
<div style="left:969px;top:960px;width:97px;height:28px;border:1px solid #8d92a6;border-radius:4px;background:#fff;"></div>
<span class="t" style="letter-spacing:-0.531px;top:964.5px;font-size:15.5px;color:#111;left:978.3px;">Drucken</span>
<svg style="left:1051.5px;top:971.5px;" width="10" height="6" viewBox="0 0 10 6"><path d="M0.3 0.3h9.4l-4.7 5.2z" fill="#111"/></svg>
<div style="left:1076.5px;top:960px;width:128.5px;height:28px;border:1px solid #8d92a6;border-radius:4px;background:#fff;"></div>
<span class="t" style="letter-spacing:-0.52px;top:964.5px;font-size:15.5px;color:#111;left:1085.7px;">Bewegungen</span>
<svg style="left:1190px;top:971.5px;" width="10" height="6" viewBox="0 0 10 6"><path d="M0.3 0.3h9.4l-4.7 5.2z" fill="#111"/></svg>
<div class="btn" style="left:1216px;top:959px;width:122.5px;height:30px;"></div>
<span class="t" style="letter-spacing:-0.264px;top:965.5px;font-size:16.7px;color:#111;left:1225px;">Neue Gruppe</span>
<div class="btn" style="left:1349px;top:959px;width:120px;height:30px;"></div>
<span class="t" style="letter-spacing:-0.125px;top:965.5px;font-size:16.7px;color:#111;left:1357.8px;">Neue Anlage</span>
<div class="btn" style="left:1481px;top:959px;width:75px;height:30px;"></div>
<span class="t" style="letter-spacing:-0.252px;top:965.5px;font-size:16.7px;color:#111;left:1486.4px;">Kopieren</span>
<div class="btn" style="left:1566px;top:959px;width:75px;height:30px;"></div>
<span class="t" style="letter-spacing:-0.652px;top:965.5px;font-size:16.7px;color:#111;left:1577.3px;">Suchen</span>
<div class="btn" style="left:1651px;top:959px;width:75px;height:30px;"></div>
<span class="t" style="letter-spacing:-0.556px;top:965.5px;font-size:16.7px;color:#111;left:1659px;">Löschen</span>
<div style="left:1736px;top:959px;width:80px;height:30px;background:#0a3d7b;border:1px solid #08305f;"></div>
<span class="t" style="letter-spacing:-0.384px;top:965.5px;font-size:16.7px;color:#fff;left:1740.3px;">Speichern</span>
<div class="btn" style="left:1826px;top:959px;width:83px;height:30px;"></div>
<span class="t" style="letter-spacing:-0.66px;top:965.5px;font-size:16.7px;color:#111;left:1830.5px;">Schliessen</span>
</body></html>
